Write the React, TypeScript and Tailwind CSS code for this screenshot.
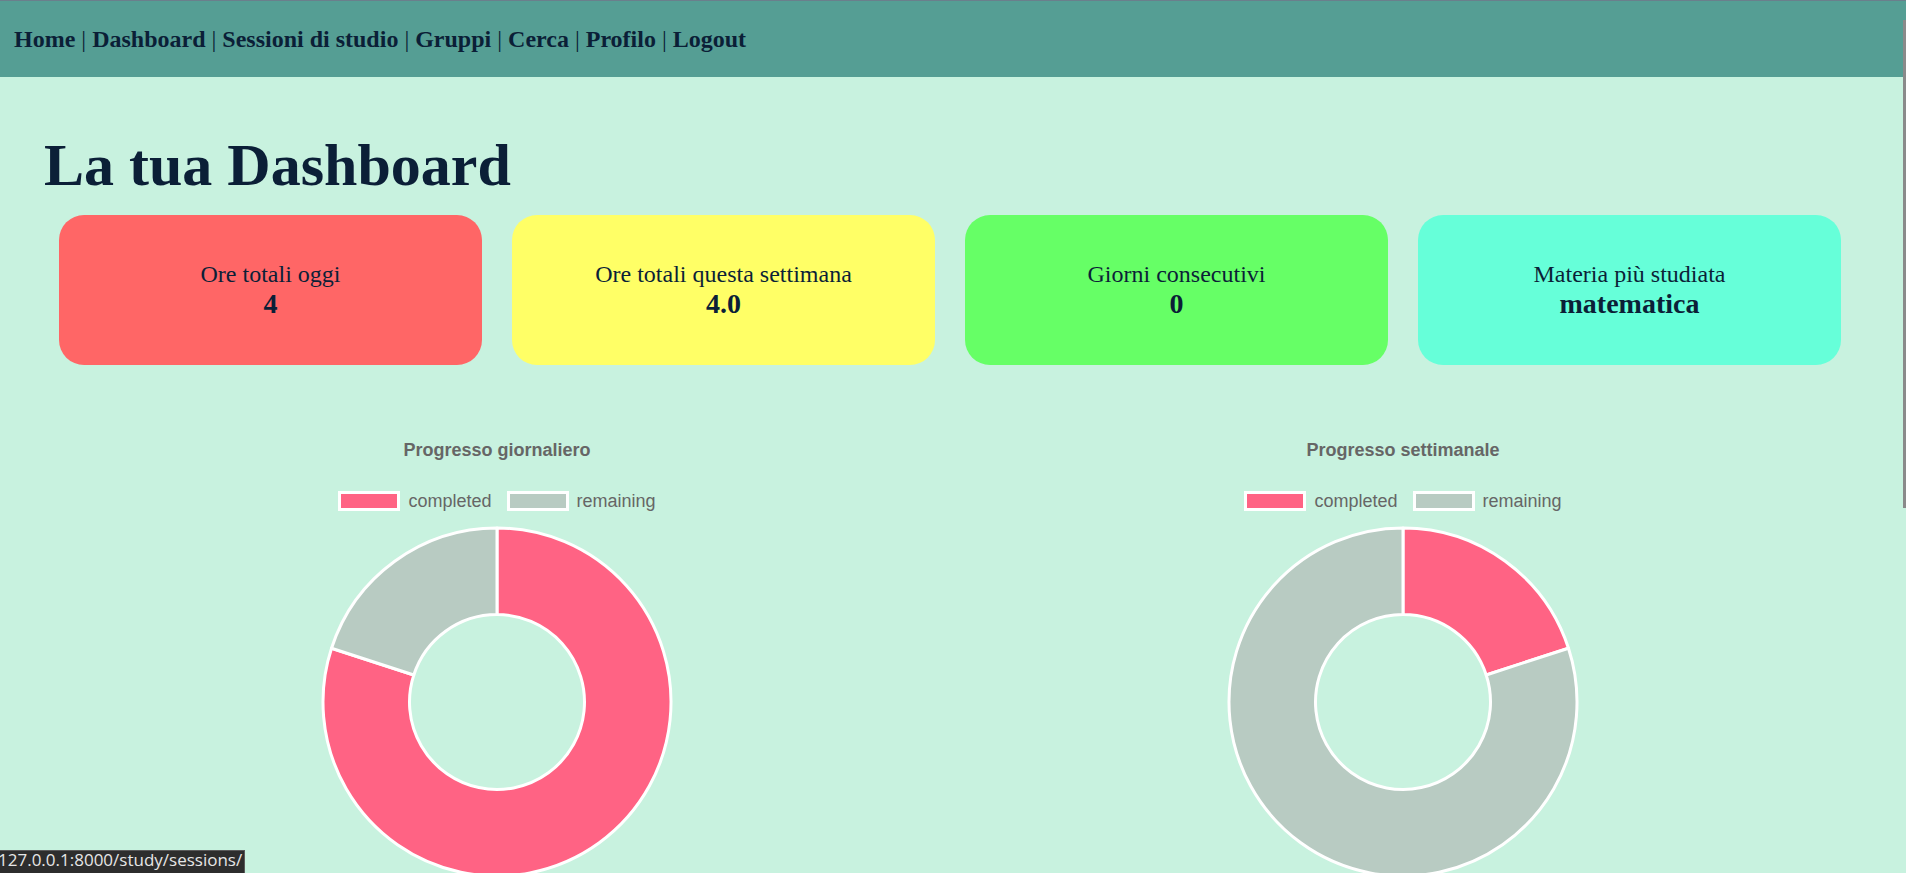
import React from "react";

const PINK = "#ff6384";
const GRAY = "#b8cbc2";

function arc(cx: number, cy: number, R: number, r: number, f0: number, f1: number) {
  const a0 = f0 * 2 * Math.PI - Math.PI / 2;
  const a1 = f1 * 2 * Math.PI - Math.PI / 2;
  const large = f1 - f0 > 0.5 ? 1 : 0;
  const p = (rad: number, a: number) => `${cx + rad * Math.cos(a)} ${cy + rad * Math.sin(a)}`;
  return `M ${p(R, a0)} A ${R} ${R} 0 ${large} 1 ${p(R, a1)} L ${p(r, a1)} A ${r} ${r} 0 ${large} 0 ${p(r, a0)} Z`;
}

function Donut({ done, total }: { done: number; total: number }) {
  const f = done / total;
  return (
    <svg width="360" height="360" viewBox="0 0 360 360" className="mt-[11px] block">
      <path d={arc(180, 180, 174, 87.5, 0, f)} fill={PINK} stroke="#ffffff" strokeWidth="3" strokeLinejoin="round" />
      <path d={arc(180, 180, 174, 87.5, f, 1)} fill={GRAY} stroke="#ffffff" strokeWidth="3" strokeLinejoin="round" />
    </svg>
  );
}

function Chart({ title, done, total }: { title: string; done: number; total: number }) {
  return (
    <div className="flex flex-col items-center font-['Liberation_Sans',Arial,sans-serif] text-[#666666]">
      <div className="h-[20px] text-[18px] font-bold leading-[20px]">{title}</div>
      <div className="mt-[31px] flex h-[20px] items-center text-[18px] leading-[20px]">
        <span className="h-[20px] w-[62px] border-[3px] border-white bg-[#ff6384]" />
        <span className="ml-[8px]">completed</span>
        <span className="ml-[15px] h-[20px] w-[62px] border-[3px] border-white bg-[#b8cbc2]" />
        <span className="ml-[8px]">remaining</span>
      </div>
      <Donut done={done} total={total} />
    </div>
  );
}

function Card({ label, value, bg }: { label: string; value: string; bg: string }) {
  return (
    <div className={`mx-[15px] flex h-[150px] flex-1 flex-col items-center justify-center rounded-[25px] ${bg}`}>
      <div className="text-[24px] leading-[28px]">{label}</div>
      <div className="text-[28px] font-bold leading-[32px]">{value}</div>
    </div>
  );
}

export default function App() {
  const links = ["Home", "Dashboard", "Sessioni di studio", "Gruppi", "Cerca", "Profilo", "Logout"];
  return (
    <div className="relative h-[873px] w-full overflow-hidden bg-[#c8f2df] font-['Liberation_Serif','Times_New_Roman',serif] text-[#0b1f37]">
      <nav className="flex h-[77px] items-center border-t border-[#6a7f8c] bg-[#559e94] pl-[14px] text-[24px] whitespace-pre">
        {links.map((l, i) => (
          <React.Fragment key={l}>
            {i > 0 && <span>{" | "}</span>}
            <a className="cursor-pointer font-bold">{l}</a>
          </React.Fragment>
        ))}
      </nav>
      <main className="pl-[44px] pr-[50px]">
        <h1 className="mt-[54px] text-[60px] font-bold leading-[69px]">La tua Dashboard</h1>
        <div className="mt-[15px] flex">
          <Card label="Ore totali oggi" value="4" bg="bg-[#ff6666]" />
          <Card label="Ore totali questa settimana" value="4.0" bg="bg-[#ffff66]" />
          <Card label="Giorni consecutivi" value="0" bg="bg-[#66ff66]" />
          <Card label="Materia più studiata" value="matematica" bg="bg-[#66ffd9]" />
        </div>
        <div className="mt-[75px] grid grid-cols-2">
          <Chart title="Progresso giornaliero" done={4} total={5} />
          <Chart title="Progresso settimanale" done={4} total={20} />
        </div>
      </main>
      <div className="absolute right-0 top-[20px] h-[488px] w-[3px] bg-[#8a8a8a]" />
      <div className="absolute left-0 top-[850px] h-[30px] w-[245px] overflow-hidden whitespace-nowrap border-r border-t border-[#5a5a5a] bg-[#2d2d2d] font-['Open_Sans','Noto_Sans',sans-serif] text-[17px] leading-[17px] text-[#e6e6e6]">
        <span className="-ml-[2px] inline-block">127.0.0.1:8000/study/sessions/</span>
      </div>
    </div>
  );
}
